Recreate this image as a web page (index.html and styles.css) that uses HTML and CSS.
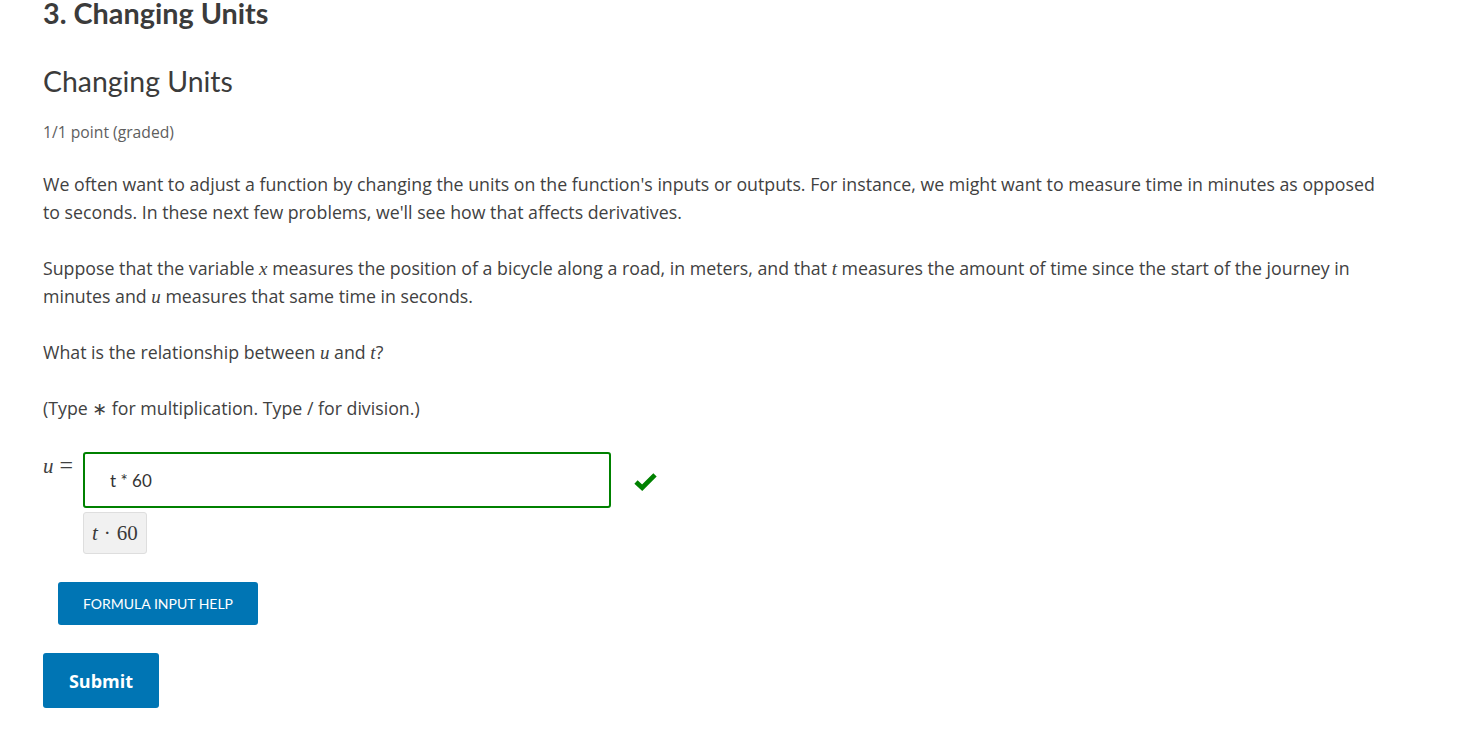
FILE: index.html
```html
<!DOCTYPE html>
<html>
<head>
<meta charset="utf-8">
<link rel="stylesheet" href="styles.css">
</head>
<body>
<main class="page">
  <h2 class="unit-title">3. Changing Units</h2>
  <section class="problem">
    <h3 class="problem-title">Changing Units</h3>
    <div class="points">1/1 point (graded)</div>
    <p class="para">We often want to adjust a function by changing the units on the function's inputs or outputs. For instance, we might want to measure time in minutes as opposed to seconds. In these next few problems, we'll see how that affects derivatives.</p>
    <p class="para">Suppose that the variable <span class="math">x</span> measures the position of a bicycle along a road, in meters, and that <span class="math">t</span> measures the amount of time since the start of the journey in minutes and <span class="math">u</span> measures that same time in seconds.</p>
    <p class="para">What is the relationship between <span class="math">u</span> and <span class="math">t</span>?</p>
    <p class="para">(Type <span class="star">∗</span> for multiplication. Type / for division.)</p>
    <div class="answer-row">
      <div class="label"><span class="math">u</span><span class="eq">=</span></div>
      <div class="answer-col">
        <div class="input-wrap">
          <div class="input">t * 60</div>
          <svg class="check" viewBox="0 0 24 20" width="23" height="19"><path d="M2 10.5 L8.5 16.5 L22 3" fill="none" stroke="#008100" stroke-width="5" stroke-linejoin="miter"/></svg>
        </div>
        <div class="preview"><span class="math">t</span><span class="dot">·</span><span class="num">60</span></div>
      </div>
    </div>
    <button class="help-btn">FORMULA INPUT HELP</button>
    <button class="submit-btn">Submit</button>
  </section>
</main>
</body>
</html>
```
FILE: styles.css
```css
html, body {
  margin: 0;
  padding: 0;
  background: #fff;
}
body {
  font-family: "Open Sans", Lato, sans-serif;
  color: #414141;
}
.page {
  padding: 0 0 0 43px;
  width: 1340px;
}
.unit-title {
  margin: 0;
  font-family: Lato, sans-serif;
  font-size: 28.8px;
  line-height: 26px;
  font-weight: 700;
  color: #3b3b3b;
}
.problem-title {
  margin: 37px 0 0;
  font-family: Lato, sans-serif;
  font-size: 28.4px;
  line-height: 36px;
  font-weight: 400;
  color: #3b3b3b;
}
.points {
  margin-top: 23px;
  font-size: 15.7px;
  line-height: 20px;
  color: #5e5e5e;
}
.para {
  margin: 28px 0 0;
  font-size: 17.75px;
  line-height: 28px;
}
.math {
  font-family: "Liberation Serif", "DejaVu Serif", serif;
  font-style: italic;
  font-size: 19px;
  line-height: 1;
}
.star {
  font-family: "DejaVu Sans", sans-serif;
  line-height: 1;
}
.answer-row {
  display: flex;
  margin-top: 30px;
}
.label {
  width: 40px;
  line-height: 26px;
  display: flex;
  align-items: baseline;
  gap: 6px;
}
.label .math {
  font-size: 21px;
  line-height: 26px;
}
.label .eq {
  font-family: "Liberation Serif", serif;
  font-size: 24px;
}
.answer-col {
  display: flex;
  flex-direction: column;
}
.input-wrap {
  display: flex;
  align-items: center;
  gap: 23px;
}
.input {
  box-sizing: border-box;
  width: 528px;
  height: 56px;
  border: 2px solid #008100;
  border-radius: 3px;
  padding: 0 25px;
  display: flex;
  align-items: center;
  font-family: Lato, sans-serif;
  font-size: 17px;
  color: #333;
}
.check {
  display: block;
  margin-top: 3px;
}
.preview {
  box-sizing: border-box;
  align-self: flex-start;
  height: 42px;
  margin-top: 4px;
  background: #f1f1f1;
  border: 1px solid #dedede;
  border-radius: 3px;
  padding: 6px 8px;
  font-family: "Liberation Serif", serif;
  font-size: 21px;
  line-height: 28px;
  color: #3a3a3a;
}
.preview .math {
  font-size: 21px;
  line-height: 28px;
}
.preview .dot {
  margin: 0 6px;
}
.help-btn {
  display: block;
  margin: 28px 0 0 15px;
  width: 200px;
  height: 43px;
  border: none;
  border-radius: 3px;
  background: #0075b4;
  color: #fff;
  font-family: Lato, sans-serif;
  font-size: 14px;
}
.submit-btn {
  display: block;
  margin: 28px 0 0;
  width: 116px;
  height: 55px;
  border: none;
  border-radius: 3px;
  background: #0075b4;
  color: #fff;
  font-family: "Open Sans", sans-serif;
  font-weight: 700;
  font-size: 18px;
}
```
